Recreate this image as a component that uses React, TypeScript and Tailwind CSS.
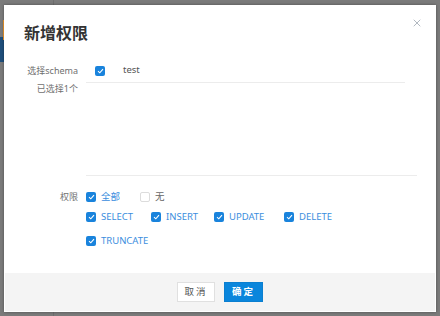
import React from "react";
import { X } from "lucide-react";

const font = "font-['Noto_Sans','Noto_Sans_CJK_SC',sans-serif]";

const CheckBox = ({ checked }: { checked: boolean }) =>
  checked ? (
    <span className="flex h-[10px] w-[10px] shrink-0 items-center justify-center rounded-[2px] bg-[#1983dc]">
      <svg width="7" height="6" viewBox="0 0 7 6" fill="none">
        <path d="M1 3.2L2.8 4.8L6 1.2" stroke="white" strokeWidth="1.1" />
      </svg>
    </span>
  ) : (
    <span className="h-[10px] w-[10px] shrink-0 rounded-[2px] border border-[#dcdcdc] bg-white" />
  );

const Option = ({
  label,
  checked = true,
  width,
}: {
  label: string;
  checked?: boolean;
  width: string;
}) => (
  <div className={`flex items-center gap-[5px] ${width}`}>
    <CheckBox checked={checked} />
    <span className={checked ? "text-[#3b8ede]" : "text-[#666]"}>{label}</span>
  </div>
);

export default function App() {
  return (
    <div
      className={`relative h-[316px] w-[440px] overflow-hidden bg-[#7b7b7b] ${font}`}
    >
      {/* page behind the overlay */}
      <div className="absolute left-[53px] top-0 h-full w-px bg-[#6e6e6e]" />
      <div className="absolute left-0 top-[37px] h-[25px] w-[4px] bg-[#1f4f7c]" />
      <div className="absolute left-[3px] top-[20px] h-[20px] w-[2px] bg-[#f39a2b]" />

      <div className="pl-[4px] pt-[5px]">
        <div className="relative flex h-[307px] w-[432px] flex-col bg-white shadow-[0_0_3px_rgba(0,0,0,0.35)]">
          <button className="absolute right-[13px] top-[12px] text-[#8f99a5]">
            <X size={12} strokeWidth={1.4} />
          </button>

          <div className="flex-1 text-[9.5px]">
            <h2 className="pl-[20px] pt-[17px] text-[16px] font-bold leading-[22px] text-[#333]">
              新增权限
            </h2>

            {/* schema */}
            <div className="mt-[15px] flex">
              <div className="w-[74px] shrink-0 text-right text-[9px] text-[#707070]">
                <div className="flex h-[24px] items-center justify-end">选择schema</div>
                <div className="leading-[12px]">已选择1个</div>
              </div>
              <div className="ml-[8px] h-[117px] w-[331px] border-b border-[#ececec]">
                <div className="flex h-[24px] w-[319px] items-center border-b border-[#ececec] pl-[9px]">
                  <CheckBox checked />
                  <span className="ml-[18px] text-[#555]">test</span>
                </div>
              </div>
            </div>

            {/* permissions */}
            <div className="mt-[11px] flex">
              <div className="flex h-[20px] w-[74px] shrink-0 items-center justify-end text-[9px] text-[#707070]">
                权限
              </div>
              <div className="ml-[8px] flex flex-col">
                <div className="flex h-[20px] items-center">
                  <Option label="全部" width="w-[54px]" />
                  <Option label="无" checked={false} width="w-[40px]" />
                </div>
                <div className="flex h-[20px] items-center">
                  <Option label="SELECT" width="w-[65px]" />
                  <Option label="INSERT" width="w-[63px]" />
                  <Option label="UPDATE" width="w-[70px]" />
                  <Option label="DELETE" width="w-[60px]" />
                </div>
                <div className="mt-[4px] flex h-[20px] items-center">
                  <Option label="TRUNCATE" width="w-[80px]" />
                </div>
              </div>
            </div>
          </div>

          <div className="mx-px mb-px flex h-[38px] items-center justify-center gap-[9px] bg-[#f4f4f4] text-[9.5px]">
            <button className="h-[20px] w-[38px] border border-[#e0e0e0] bg-white tracking-[2px] text-[#555]">
              取消
            </button>
            <button className="h-[20px] w-[39px] border border-[#0b7fd0] bg-[#0a86dc] font-semibold tracking-[2px] text-white">
              确定
            </button>
          </div>
        </div>
      </div>
    </div>
  );
}
